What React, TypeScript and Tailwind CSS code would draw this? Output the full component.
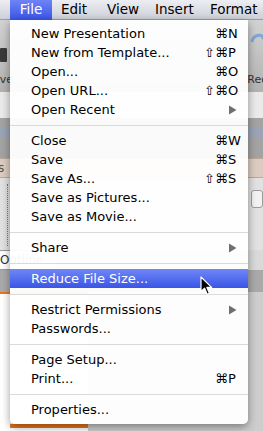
import React from "react";

type Item =
  | { kind: "item"; label: string; mods?: string; key?: string; sub?: boolean; active?: boolean }
  | { kind: "sep" };

const items: Item[] = [
  { kind: "item", label: "New Presentation", mods: "⌘", key: "N" },
  { kind: "item", label: "New from Template...", mods: "⇧⌘", key: "P" },
  { kind: "item", label: "Open...", mods: "⌘", key: "O" },
  { kind: "item", label: "Open URL...", mods: "⇧⌘", key: "O" },
  { kind: "item", label: "Open Recent", sub: true },
  { kind: "sep" },
  { kind: "item", label: "Close", mods: "⌘", key: "W" },
  { kind: "item", label: "Save", mods: "⌘", key: "S" },
  { kind: "item", label: "Save As...", mods: "⇧⌘", key: "S" },
  { kind: "item", label: "Save as Pictures..." },
  { kind: "item", label: "Save as Movie..." },
  { kind: "sep" },
  { kind: "item", label: "Share", sub: true },
  { kind: "sep" },
  { kind: "item", label: "Reduce File Size...", active: true },
  { kind: "sep" },
  { kind: "item", label: "Restrict Permissions", sub: true },
  { kind: "item", label: "Passwords..." },
  { kind: "sep" },
  { kind: "item", label: "Page Setup..." },
  { kind: "item", label: "Print...", mods: "⌘", key: "P" },
  { kind: "sep" },
  { kind: "item", label: "Properties..." },
];

function Arrow() {
  return (
    <svg width="9" height="10" viewBox="0 0 9 10" className="mt-[1px]">
      <path d="M1 0.5 L8.5 5 L1 9.5 Z" fill="#6f6f6f" />
    </svg>
  );
}

function Cursor() {
  return (
    <svg width="13" height="20" viewBox="0 0 13 20" className="absolute left-[190px] top-[7px]">
      <path
        d="M1 1 L1 15.5 L4.6 12.2 L7.2 18.2 L9.4 17.2 L6.9 11.4 L11.6 11.4 Z"
        fill="#000"
        stroke="#fff"
        strokeWidth="1.2"
        strokeLinejoin="round"
      />
    </svg>
  );
}

export default function App() {
  const font = { fontFamily: '"DejaVu Sans", "Noto Sans", sans-serif' };
  return (
    <div className="relative w-[263px] h-[431px] overflow-hidden bg-white" style={font}>
      {/* Menu bar */}
      <div className="flex h-[20px] items-center bg-gradient-to-b from-[#eceef3] to-[#cdd0d7] border-b border-[#9a9ca3] text-[13.5px] text-black">
        <div className="ml-[10px] flex h-[20px] w-[42px] items-center justify-center bg-gradient-to-b from-[#6f83f6] to-[#3a53e6] text-white">
          File
        </div>
        <div className="ml-[9px] w-[46px]">Edit</div>
        <div className="w-[48px]">View</div>
        <div className="w-[55px]">Insert</div>
        <div className="w-[53px]">Format</div>
      </div>

      {/* Background app (PowerPoint UI behind the menu) */}
      <div className="flex flex-col text-[11px] text-[#333]">
        <div className="relative flex h-[72px] flex-col justify-end bg-gradient-to-b from-[#d2d2d2] to-[#b2b2b2] pb-[4px]">
          <div className="absolute left-0 top-[28px] h-[14px] w-[7px] rounded-[1px] bg-[#3a3a3a]" />
          <svg width="18" height="16" viewBox="0 0 18 16" className="absolute left-[250px] top-[10px]">
            <path d="M2 12 C3 5 11 3 14 8" fill="none" stroke="#7ea6d6" strokeWidth="3" />
            <path d="M11 9 L17 10 L15 4 Z" fill="#7ea6d6" />
          </svg>
          <div className="flex justify-between whitespace-nowrap">
            <span className="-ml-[14px]">Save</span>
            <span className="-mr-[12px]">Redo</span>
          </div>
        </div>
        <div className="h-[26px] bg-[#eaeaea]" />
        <div className="flex h-[40px] flex-col bg-[#a3a3a3]">
          <div className="mt-[10px] h-[10px] bg-[#9aa4b4]" />
        </div>
        <div className="flex h-[20px] items-center whitespace-nowrap border-y border-[#b9a89c] bg-[#dccbc0] text-[12px] text-[#555]">
          <span className="-ml-[33px]">Tables</span>
        </div>
        <div className="relative h-[72px] bg-[#e1e1e1]">
          <div className="absolute left-[7px] top-[6px] h-[62px] border-l border-dotted border-[#777]" />
          <div className="absolute right-0 top-[12px] h-[18px] w-[12px] rounded-[3px] border border-[#9c9c9c] bg-[#f2f2f2]" />
        </div>
        <div className="flex h-[20px] items-center bg-[#d9d9d9]">
          <div className="-ml-[2px] flex h-[20px] w-[60px] items-center rounded-t-[3px] border border-[#9a9a9a] bg-white pl-[1px] text-[12px] text-[#333]">
            <span className="whitespace-nowrap">Outline</span>
          </div>
        </div>
        <div className="h-[22px] bg-[#a9a9a9]" />
        <div className="flex h-[139px]">
          <div className="flex w-[88px] flex-col justify-between border-t-2 border-[#e8761e] bg-white">
            <div />
            <div className="mb-[3px] ml-[10px] h-[4px] bg-[#e8761e]" />
          </div>
          <div className="flex-1 bg-[#cdcdcd]" />
        </div>
      </div>

      {/* Dropdown menu overlay */}
      <div className="absolute left-[10px] top-[20px] w-[238px] rounded-b-[5px] bg-white/[0.95] pt-[4px] pb-[5px] text-[13px] text-black shadow-[0_3px_8px_rgba(0,0,0,0.4)]">
        {items.map((it, i) =>
          it.kind === "sep" ? (
            <div key={i} className="flex h-[12px] items-center">
              <div className="h-px w-full bg-[#dadada]" />
            </div>
          ) : (
            <div
              key={i}
              className={
                "relative grid h-[19px] grid-cols-[1fr_auto_12px] items-center pl-[21px] pr-[8px] " +
                (it.active ? "bg-gradient-to-b from-[#7086f6] to-[#3b54e7] text-white" : "")
              }
            >
              <span className="whitespace-nowrap">{it.label}</span>
              <span className="text-right">{it.mods ?? ""}</span>
              <span className="flex items-center">{it.sub ? <Arrow /> : it.key ?? ""}</span>
              {it.active ? <Cursor /> : null}
            </div>
          )
        )}
      </div>
    </div>
  );
}
